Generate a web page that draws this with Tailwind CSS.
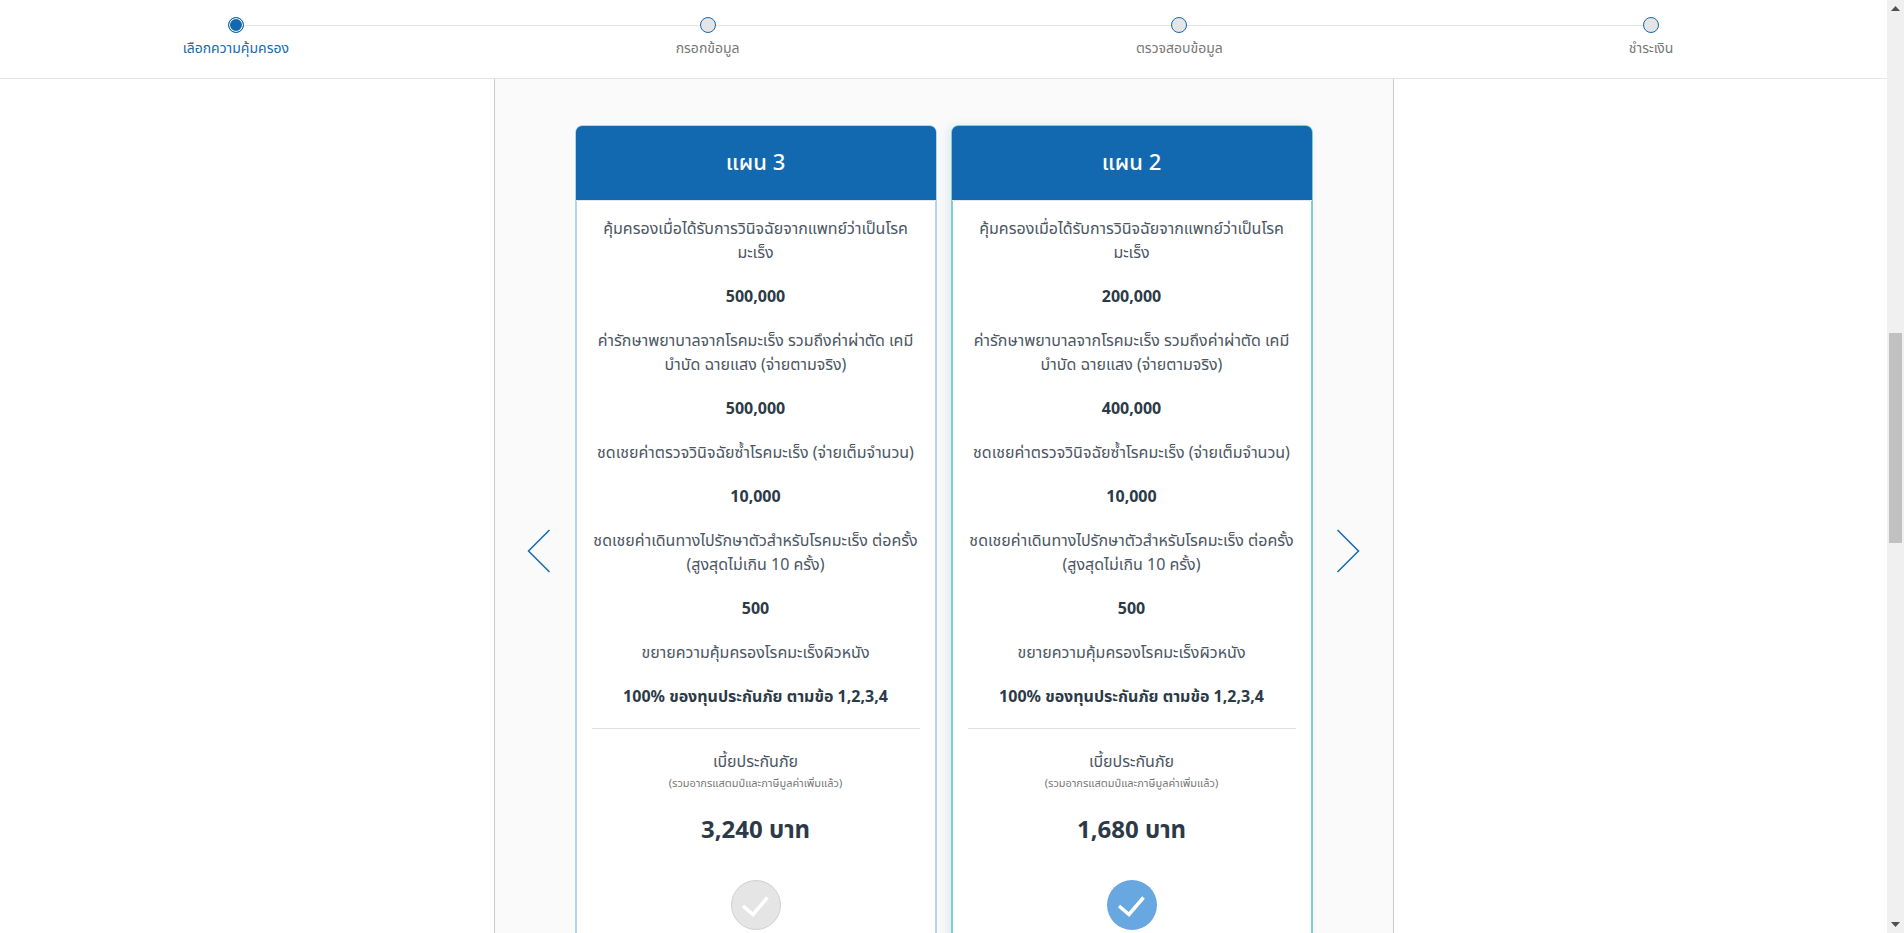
<!DOCTYPE html>
<html lang="th">
<head>
<meta charset="utf-8">
<meta name="viewport" content="width=device-width, initial-scale=1">
<title>เลือกความคุ้มครอง</title>
<script src="https://cdn.jsdelivr.net/npm/@tailwindcss/browser@4"></script>
</head>
<body class="flex h-screen overflow-hidden bg-white font-['Noto_Sans','Noto_Sans_Thai',sans-serif] text-base text-[#4c5663]">
<div class="flex min-w-0 flex-1 flex-col overflow-hidden">
  <header class="shrink-0 border-b border-[#e5e5e5] pt-[17px] pb-5">
    <ol class="grid grid-cols-4 text-sm text-[#777]">
      <li class="text-[#1369b0]" aria-current="step">
        <div class="flex items-center"><span class="flex-1"></span><span class="size-4 rounded-full border border-[#1369b0] bg-[#1369b0] ring-1 ring-inset ring-white"></span><span class="h-px flex-1 bg-[#e5e5e5]"></span></div>
        <p class="mt-[5px] text-center leading-5">เลือกความคุ้มครอง</p>
      </li>
      <li>
        <div class="flex items-center"><span class="h-px flex-1 bg-[#e5e5e5]"></span><span class="size-4 rounded-full border border-[#1369b0] bg-[#e5e5e5]"></span><span class="h-px flex-1 bg-[#e5e5e5]"></span></div>
        <p class="mt-[5px] text-center leading-5">กรอกข้อมูล</p>
      </li>
      <li>
        <div class="flex items-center"><span class="h-px flex-1 bg-[#e5e5e5]"></span><span class="size-4 rounded-full border border-[#1369b0] bg-[#e5e5e5]"></span><span class="h-px flex-1 bg-[#e5e5e5]"></span></div>
        <p class="mt-[5px] text-center leading-5">ตรวจสอบข้อมูล</p>
      </li>
      <li>
        <div class="flex items-center"><span class="h-px flex-1 bg-[#e5e5e5]"></span><span class="size-4 rounded-full border border-[#1369b0] bg-[#e5e5e5]"></span><span class="flex-1"></span></div>
        <p class="mt-[5px] text-center leading-5">ชำระเงิน</p>
      </li>
    </ol>
  </header>
  <main class="mx-auto flex w-full max-w-[900px] shrink-0 items-center border-x border-[#ccc] bg-[#fafafa] pt-[46px]">
    <button type="button" aria-label="ก่อนหน้า" class="flex w-20 shrink-0 justify-center pl-[9px]">
      <svg class="h-11 w-6" viewBox="0 0 24 44" fill="none" stroke="#1369b0" stroke-width="1.500"><path d="M22.500 1 1.500 22 22.500 43"/></svg>
    </button>
    <div class="grid min-w-0 flex-1 grid-cols-2 gap-[14px]">
      <section class="rounded-lg border-2 border-[#b5d3f0] bg-white text-center">
        <h2 class="-mx-px -mt-px rounded-t-md border-b border-[#e5e5e5] bg-[#1369b0] pt-[18px] pb-[22px] text-[22px] leading-[34px] font-medium text-white">แผน 3</h2>
        <div class="px-[15px] pt-[15px]">
          <dl class="flex flex-col gap-5 border-b border-[#e0e0e0] pb-5 leading-6">
            <dt>คุ้มครองเมื่อได้รับการวินิจฉัยจากแพทย์ว่าเป็นโรค<br>มะเร็ง</dt><dd class="font-bold text-[#2c3a47]">500,000</dd>
            <dt>ค่ารักษาพยาบาลจากโรคมะเร็ง รวมถึงค่าผ่าตัด เคมี<br>บำบัด ฉายแสง (จ่ายตามจริง)</dt><dd class="font-bold text-[#2c3a47]">500,000</dd>
            <dt>ชดเชยค่าตรวจวินิจฉัยซ้ำโรคมะเร็ง (จ่ายเต็มจำนวน)</dt><dd class="font-bold text-[#2c3a47]">10,000</dd>
            <dt>ชดเชยค่าเดินทางไปรักษาตัวสำหรับโรคมะเร็ง ต่อครั้ง<br>(สูงสุดไม่เกิน 10 ครั้ง)</dt><dd class="font-bold text-[#2c3a47]">500</dd>
            <dt>ขยายความคุ้มครองโรคมะเร็งผิวหนัง</dt><dd class="font-bold text-[#2c3a47]">100% ของทุนประกันภัย ตามข้อ 1,2,3,4</dd>
          </dl>
          <p class="mt-5 leading-6">เบี้ยประกันภัย</p>
          <p class="text-[11px] leading-5 text-[#777]">(รวมอากรแสตมป์และภาษีมูลค่าเพิ่มแล้ว)</p>
          <p class="mt-5 text-2xl leading-8 font-bold text-[#2c3a47]">3,240 บาท</p>
          <label class="mt-[35px] flex cursor-pointer justify-center pb-11">
            <input type="radio" name="plan" class="sr-only" aria-label="แผน 3">
            <svg class="size-[50px]" viewBox="0 0 50 50" fill="none"><circle cx="25" cy="25" r="24.500" fill="#e5e5e5" stroke="#d0d0d0"/><path d="M12 26 22 34.500 36.500 17.500" stroke="#fff" stroke-width="3.500"/></svg>
          </label>
        </div>
      </section>
      <section class="rounded-lg border-2 border-[#7fd0cd] bg-white text-center shadow-[-4px_0_10px_rgba(19,105,176,0.10)]">
        <h2 class="-mx-px -mt-px rounded-t-md border-b border-[#e5e5e5] bg-[#1369b0] pt-[18px] pb-[22px] text-[22px] leading-[34px] font-medium text-white">แผน 2</h2>
        <div class="px-[15px] pt-[15px]">
          <dl class="flex flex-col gap-5 border-b border-[#e0e0e0] pb-5 leading-6">
            <dt>คุ้มครองเมื่อได้รับการวินิจฉัยจากแพทย์ว่าเป็นโรค<br>มะเร็ง</dt><dd class="font-bold text-[#2c3a47]">200,000</dd>
            <dt>ค่ารักษาพยาบาลจากโรคมะเร็ง รวมถึงค่าผ่าตัด เคมี<br>บำบัด ฉายแสง (จ่ายตามจริง)</dt><dd class="font-bold text-[#2c3a47]">400,000</dd>
            <dt>ชดเชยค่าตรวจวินิจฉัยซ้ำโรคมะเร็ง (จ่ายเต็มจำนวน)</dt><dd class="font-bold text-[#2c3a47]">10,000</dd>
            <dt>ชดเชยค่าเดินทางไปรักษาตัวสำหรับโรคมะเร็ง ต่อครั้ง<br>(สูงสุดไม่เกิน 10 ครั้ง)</dt><dd class="font-bold text-[#2c3a47]">500</dd>
            <dt>ขยายความคุ้มครองโรคมะเร็งผิวหนัง</dt><dd class="font-bold text-[#2c3a47]">100% ของทุนประกันภัย ตามข้อ 1,2,3,4</dd>
          </dl>
          <p class="mt-5 leading-6">เบี้ยประกันภัย</p>
          <p class="text-[11px] leading-5 text-[#777]">(รวมอากรแสตมป์และภาษีมูลค่าเพิ่มแล้ว)</p>
          <p class="mt-5 text-2xl leading-8 font-bold text-[#2c3a47]">1,680 บาท</p>
          <label class="mt-[35px] flex cursor-pointer justify-center pb-11">
            <input type="radio" name="plan" checked class="sr-only" aria-label="แผน 2">
            <svg class="size-[50px]" viewBox="0 0 50 50" fill="none"><circle cx="25" cy="25" r="25" fill="#68a7df"/><path d="M12 26 22 34.500 36.500 17.500" stroke="#fff" stroke-width="3.500"/></svg>
          </label>
        </div>
      </section>
    </div>
    <button type="button" aria-label="ถัดไป" class="flex w-20 shrink-0 justify-center pr-[9px]">
      <svg class="h-11 w-6" viewBox="0 0 24 44" fill="none" stroke="#1369b0" stroke-width="1.500"><path d="M1.500 1 22.500 22 1.500 43"/></svg>
    </button>
  </main>
</div>
<div class="flex w-[17px] shrink-0 flex-col items-center justify-between bg-[#f0f0f0]" aria-hidden="true">
  <svg class="size-[17px]" viewBox="0 0 17 17"><path d="M4 11h9L8.500 6z" fill="#505050"/></svg>
  <div class="flex w-[13px] flex-1 flex-col"><div class="flex-[316]"></div><div class="flex-[210] bg-[#c1c1c1]"></div><div class="flex-[373]"></div></div>
  <svg class="size-[17px]" viewBox="0 0 17 17"><path d="M4 6h9l-4.500 5z" fill="#505050"/></svg>
</div>
</body>
</html>
